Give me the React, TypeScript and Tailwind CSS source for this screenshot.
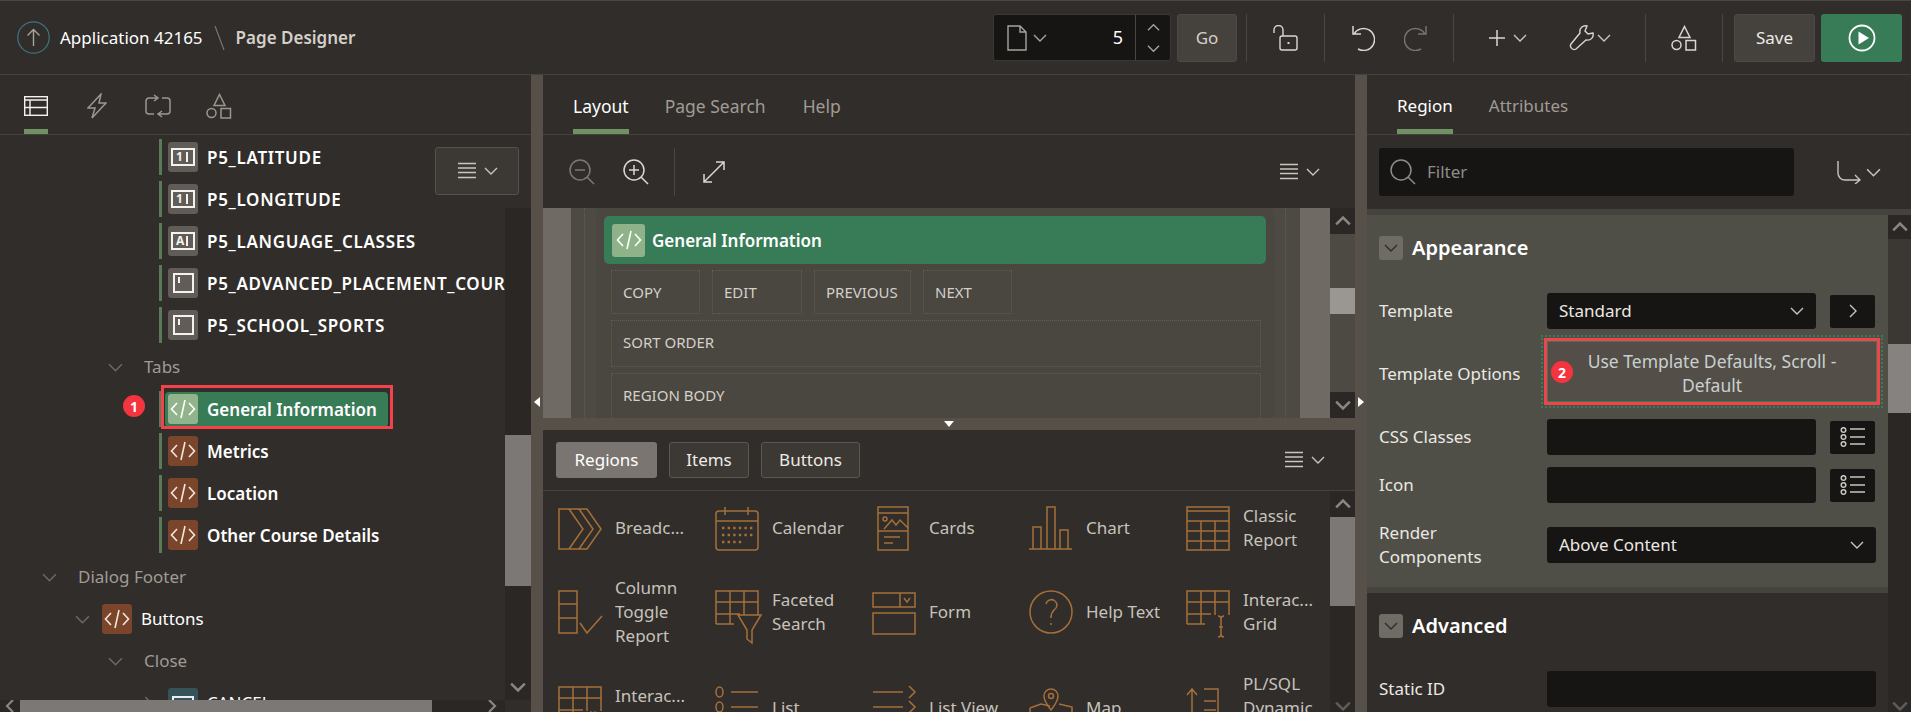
import type { ReactNode } from 'react';

const FONT = 'font-["Noto_Sans",sans-serif]';

const Chevron = ({ size = 'w-[14px] h-[14px]', className = '', color = '#c9c5bf', dir = 'down', weight = '1.4' }: { size?: string; className?: string; color?: string; dir?: 'down' | 'up' | 'right' | 'left'; weight?: string }) => {
    const d = { down: 'M1 4l6 6 6-6', up: 'M1 10l6-6 6 6', right: 'M4 1l6 6-6 6', left: 'M10 1L4 7l6 6' }[dir];
    return (
        <svg viewBox="0 0 14 14" fill="none" stroke={color} strokeWidth={weight} className={`shrink-0 ${size} ${className}`}>
            <path d={d} />
        </svg>
    );
};

const HamburgerChevron = () => (
    <div className="flex items-center gap-[7px]">
        <svg viewBox="0 0 20 18" fill="none" stroke="#c9c5bf" strokeWidth="1.3" className="w-[20px] h-[18px]">
            <path d="M1 1.5h18M1 6h18M1 10.5h18M1 15.5h18" />
        </svg>
        <Chevron />
    </div>
);

const Shapes = ({ color = '#c9c5bf' }: { color?: string }) => (
    <svg viewBox="0 0 26 26" fill="none" stroke={color} strokeWidth="1.5" className="w-[26px] h-[26px]">
        <path d="M13.5 1.5l5.5 11H8z" />
        <circle cx="5.5" cy="20" r="4.5" />
        <rect x="15" y="15.5" width="9.5" height="9.5" />
    </svg>
);

const CodeIcon = ({ bg, color = '#f1e8dc' }: { bg: string; color?: string }) => (
    <div className={`w-[30px] h-[30px] rounded-[3px] flex items-center justify-center shrink-0 ${bg}`}>
        <svg viewBox="0 0 26 20" fill="none" stroke={color} strokeWidth="1.6" className="w-[26px] h-[20px]">
            <path d="M7 4L1.5 10 7 16M19 4l5.500 6L19 16M15 1l-4 18" />
        </svg>
    </div>
);

const ItemIcon = ({ kind }: { kind: 'number' | 'text' | 'blank' }) => (
    <div className="w-[30px] h-[30px] rounded-[3px] bg-[#615c57] flex items-center justify-center shrink-0">
        {kind === 'blank' ? (
            <div className="w-[21px] h-[20px] border-2 border-[#f4f2ef] pl-[3px] pt-[2px]">
                <div className="w-[2px] h-[6px] bg-[#f4f2ef]" />
            </div>
        ) : (
            <div className="w-[24px] h-[18px] border-2 border-[#f4f2ef] flex items-start pl-[3px] text-[12px] leading-[14px] font-bold text-[#f4f2ef]">
                <span className="w-[10px]">{kind === 'number' ? '1' : 'A'}</span>
                <span className="w-[2px] h-[10px] mt-[2px] bg-[#f4f2ef]" />
            </div>
        )}
    </div>
);

const TreeItem = ({ icon, label, caps }: { icon: ReactNode; label: string; caps?: boolean }) => (
    <div className="flex items-center h-[42px] pl-[159px]">
        <div className="w-[3px] h-[36px] bg-[#5b7a58] mr-[6px] shrink-0" />
        {icon}
        <span className={`ml-[9px] mt-[2px] text-[17px] font-semibold text-white whitespace-nowrap ${caps ? 'tracking-[0.7px]' : ''}`}>{label}</span>
    </div>
);

const TreeGroup = ({ pl, label }: { pl: string; label: string }) => (
    <div className={`flex items-center h-[42px] ${pl}`}>
        <Chevron size="w-[15px] h-[15px]" color="#6f6a64" />
        <span className="ml-[21px] text-[17px] text-[#a09b95]">{label}</span>
    </div>
);

const ScrollCell = ({ dir, color = '#8a8680', className = '' }: { dir: 'up' | 'down'; color?: string; className?: string }) => (
    <div className={`flex items-center justify-center bg-[#2a2725] shrink-0 ${className}`}>
        <Chevron dir={dir} color={color} weight="2.2" size="w-[16px] h-[16px]" />
    </div>
);

const LeftPanel = () => (
    <div className="w-[531px] shrink-0 flex flex-col min-h-0">
        <div className="h-[60px] border-b border-[#45413d] flex items-start shrink-0">
            <div className="ml-[24px] w-[24px] h-[59px] border-b-[5px] border-[#6f9163] pt-[21px]">
                <svg viewBox="0 0 24 20" fill="none" stroke="#f4f2ef" strokeWidth="1.4" className="w-[24px] h-[20px]">
                    <rect x="0.7" y="0.7" width="22.600" height="18.600" />
                    <path d="M0.7 4h22.600M0.700 11.500h22.600M6 4v15.300" />
                </svg>
            </div>
            <svg viewBox="0 0 20 26" fill="none" stroke="#9b9791" strokeWidth="1.5" className="ml-[39px] mt-[18px] w-[20px] h-[26px]">
                <path d="M14 1L1 15h7l-3 10 14-15h-7z" />
            </svg>
            <svg viewBox="0 0 26 24" fill="none" stroke="#9b9791" strokeWidth="1.5" className="ml-[38px] mt-[19px] w-[26px] h-[24px]">
                <path d="M13 4H4a3 3 0 0 0-3 3v10a3 3 0 0 0 3 3h5M9 1l4 3-4 3M17 4h5a3 3 0 0 1 3 3v10a3 3 0 0 1-3 3h-9M17 17l-4 3 4 3" />
            </svg>
            <div className="ml-[35px] mt-[18px]">
                <Shapes color="#9b9791" />
            </div>
        </div>
        <div className="relative flex flex-1 min-h-0">
            <div className="w-[505px] overflow-hidden pt-[1px]">
                <TreeItem caps icon={<ItemIcon kind="number" />} label="P5_LATITUDE" />
                <TreeItem caps icon={<ItemIcon kind="number" />} label="P5_LONGITUDE" />
                <TreeItem caps icon={<ItemIcon kind="text" />} label="P5_LANGUAGE_CLASSES" />
                <TreeItem caps icon={<ItemIcon kind="blank" />} label="P5_ADVANCED_PLACEMENT_COURSES" />
                <TreeItem caps icon={<ItemIcon kind="blank" />} label="P5_SCHOOL_SPORTS" />
                <TreeGroup pl="pl-[108px]" label="Tabs" />
                <div className="relative flex items-center h-[42px] pl-[159px]">
                    <div className="w-[3px] h-[36px] bg-[#5b7a58] shrink-0" />
                    <div className="ml-[3px] w-[223px] h-[35px] rounded-[4px] bg-[#387b57] flex items-center pl-[3px]">
                        <CodeIcon bg="bg-[#92b48c]" color="#ffffff" />
                        <span className="ml-[9px] mt-[2px] text-[17px] font-semibold text-white whitespace-nowrap">General Information</span>
                    </div>
                    <div className="absolute left-[161px] top-[-3px] w-[232px] h-[44px] border-[3px] border-[#f4424a]" />
                    <div className="absolute left-[123px] top-[7px] w-[22px] h-[22px] rounded-full bg-[#f4343e] text-white text-[14px] font-bold flex items-center justify-center">1</div>
                </div>
                <TreeItem icon={<CodeIcon bg="bg-[#7a452a]" />} label="Metrics" />
                <TreeItem icon={<CodeIcon bg="bg-[#7a452a]" />} label="Location" />
                <TreeItem icon={<CodeIcon bg="bg-[#7a452a]" />} label="Other Course Details" />
                <TreeGroup pl="pl-[42px]" label="Dialog Footer" />
                <div className="flex items-center h-[42px] pl-[75px]">
                    <Chevron size="w-[15px] h-[15px]" color="#6f6a64" />
                    <div className="ml-[12px]">
                        <CodeIcon bg="bg-[#7a452a]" />
                    </div>
                    <span className="ml-[9px] text-[17px] text-white">Buttons</span>
                </div>
                <TreeGroup pl="pl-[108px]" label="Close" />
                <div className="flex items-center h-[42px] pl-[141px]">
                    <Chevron dir="right" size="w-[15px] h-[15px]" color="#6f6a64" />
                    <div className="ml-[12px] w-[30px] h-[30px] rounded-[3px] bg-[#36535a] shrink-0 flex items-center justify-center">
                        <div className="w-[22px] h-[14px] border-2 border-[#e8edee]" />
                    </div>
                    <span className="ml-[9px] text-[17px] text-white">CANCEL</span>
                </div>
            </div>
            <div className="w-[26px] shrink-0 mt-[73px] flex flex-col bg-[#2a2725]">
                <div className="h-[227px] shrink-0" />
                <div className="h-[151px] shrink-0 bg-[#7b7875]" />
                <div className="flex-1" />
                <ScrollCell dir="down" className="h-[26px]" />
            </div>
            <div className="absolute left-[435px] top-[12px] w-[84px] h-[48px] bg-[#3c3834] border border-[#55514c] rounded-[3px] flex items-center justify-center">
                <HamburgerChevron />
            </div>
        </div>
        <div className="h-[12px] w-[505px] shrink-0 flex items-center bg-[#2a2725] overflow-hidden">
            <div className="w-[20px] shrink-0 flex justify-center">
                <Chevron dir="left" color="#8a8680" weight="2.2" />
            </div>
            <div className="w-[412px] h-full shrink-0 bg-[#7b7875]" />
            <div className="flex-1 flex justify-end pr-[6px]">
                <Chevron dir="right" color="#8a8680" weight="2.2" />
            </div>
        </div>
    </div>
);

const Splitter = ({ dir }: { dir: 'left' | 'right' }) => (
    <div className="w-[12px] shrink-0 bg-[#565049] flex items-center justify-center pt-[16px]">
        <div
            className={
                dir === 'left'
                    ? 'w-0 h-0 border-y-[5px] border-y-transparent border-r-[6px] border-r-white'
                    : 'w-0 h-0 border-y-[5px] border-y-transparent border-l-[6px] border-l-white'
            }
        />
    </div>
);

const DottedBox = ({ label, className }: { label: string; className: string }) => (
    <div className={`border border-dotted border-[#625d56] flex items-center pl-[11px] text-[15px] text-[#d4d0ca] ${className}`}>{label}</div>
);

const A = 'stroke-[#a56f39]';

const galleryIcons: Record<string, ReactNode> = {
    breadcrumb: <path d="M1 3h28l14 20-14 20H1zM11 3l14 20-14 20M21 3l14 20-14 20" />,
    calendar: (
        <g>
            <rect x="1" y="5" width="42" height="39" rx="3" />
            <path d="M1 15h42M10 1v8M33 1v8" />
            <path strokeDasharray="2.400 3.200" strokeWidth="2.400" d="M7 22h31M7 29h31M7 36h22" />
        </g>
    ),
    cards: (
        <g>
            <rect x="6" y="1" width="30" height="43" />
            <path d="M6 7h30M6 25h30M12 31h16M12 37h9M12 23l8-9 4 5 4-5 8 8" />
            <circle cx="13" cy="13" r="2" />
        </g>
    ),
    chart: <path d="M0 43h43M4 43V21h8v22M18 43V1h8v42M31 43V24h8v19" />,
    classic: <path d="M1 1h42v43H1zM1 5h42M1 15h42M1 25h42M1 35h42M15 15v29M29 15v29" />,
    toggle: <path d="M1 1h18v42H1zM1 14h18M1 28h18M22 33l7 10 15-17" />,
    faceted: (
        <g>
            <path d="M1 34V1h42v24M1 12h42M1 24h24M15 1v33M29 1v24M1 34h18" />
            <path d="M23 25h23l-9 15v13l-5-4V40z" />
        </g>
    ),
    form: (
        <g>
            <path d="M1 3h42v14H1zM28 3v14M32 8l3 4 3-4" />
            <rect x="1" y="23" width="42" height="21" />
        </g>
    ),
    help: (
        <g>
            <circle cx="22" cy="22" r="21" />
            <path d="M17 14a5.500 5.500 0 1 1 8 6c-2 2-3 4-3 8M22 33v2" />
        </g>
    ),
    grid: (
        <g>
            <path d="M1 34V1h42v24M1 12h42M1 24h24M15 1v33M29 1v24M1 34h18" />
            <path d="M32 26c2 0 3 1 3 3v15c0 2-1 3-3 3M38 26c-2 0-3 1-3 3v15c0 2 1 3 3 3M33 37h4" />
        </g>
    ),
    list: <path d="M16 6h27M16 21h27M8 6a3.500 5 0 1 1-7 0 3.500 5 0 0 1 7 0zM8 21a3.500 5 0 1 1-7 0 3.500 5 0 0 1 7 0z" />,
    listView: <path d="M1 6h30M1 21h30M37 0l6 6-6 6M37 15l6 6-6 6" />,
    map: (
        <g>
            <path d="M1 22l11-4 9 2M30 18l13 3v25M1 22v25" />
            <path d="M22 24c-4-5-7-9-7-14a7 7 0 0 1 14 0c0 5-3 9-7 14z" />
            <circle cx="22" cy="10" r="2.500" />
        </g>
    ),
    plsql: <path d="M6 30V3M1 9l5-6 5 6M18 3h14v30M18 15h12M18 24h12" />,
};

const GalleryCell = ({ icon, label }: { icon: string; label: ReactNode }) => (
    <div className="flex items-center pl-[2px]">
        <div className="w-[57px] shrink-0">
            <svg viewBox="0 0 46 44" fill="none" strokeWidth="1.500" className={`w-[46px] h-[44px] overflow-visible ${A}`}>
                {galleryIcons[icon]}
            </svg>
        </div>
        <div className="text-[17px] leading-[24px] text-[#c6c2bc] whitespace-nowrap">{label}</div>
    </div>
);

const CenterPanel = () => (
    <div className="w-[812px] shrink-0 flex flex-col min-h-0">
        <div className="h-[60px] shrink-0 border-b border-[#45413d] flex items-start pl-[30px] text-[17.5px]">
            <div className="h-[59px] border-b-[5px] border-[#6f9163] pt-[18px] text-white">Layout</div>
            <div className="ml-[36px] pt-[18px] text-[#a09b95]">Page Search</div>
            <div className="ml-[37px] pt-[18px] text-[#a09b95]">Help</div>
        </div>
        <div className="h-[73px] shrink-0 flex items-center pl-[26px] pr-[35px]">
            <svg viewBox="0 0 26 26" fill="none" stroke="#7c7873" strokeWidth="1.500" className="w-[26px] h-[26px]">
                <circle cx="11" cy="11" r="10" />
                <path d="M18 18l7 7M6 11h10" />
            </svg>
            <svg viewBox="0 0 26 26" fill="none" stroke="#dad7d2" strokeWidth="1.500" className="ml-[28px] w-[26px] h-[26px]">
                <circle cx="11" cy="11" r="10" />
                <path d="M18 18l7 7M6 11h10M11 6v10" />
            </svg>
            <div className="ml-[25px] w-px h-[48px] bg-[#4a4642]" />
            <svg viewBox="0 0 22 22" fill="none" stroke="#dad7d2" strokeWidth="1.500" className="ml-[28px] w-[22px] h-[22px]">
                <path d="M13 1h8v8M21 1L1 21M1 13v8h8" />
            </svg>
            <div className="ml-auto">
                <HamburgerChevron />
            </div>
        </div>
        <div className="h-[210px] shrink-0 flex overflow-hidden bg-[#4d4943]">
            <div className="w-[28px] shrink-0 bg-[#6f6a64]" />
            <div className="w-[25px] shrink-0">
                <div className="ml-[13px] h-full border-l border-dotted border-[#625d56]" />
            </div>
            <div className="w-[678px] shrink-0 bg-[#4a4640] rounded-t-[6px] px-[8px] pt-[8px]">
                <div className="h-[48px] rounded-[5px] bg-[#387b57] flex items-center pl-[8px]">
                    <div className="w-[33px] h-[33px] rounded-[3px] bg-[#8fb28b] flex items-center justify-center shrink-0">
                        <svg viewBox="0 0 26 20" fill="none" stroke="#ffffff" strokeWidth="1.600" className="w-[26px] h-[20px]">
                            <path d="M7 4L1.500 10 7 16M19 4l5.500 6L19 16M15 1l-4 18" />
                        </svg>
                    </div>
                    <span className="ml-[7px] mt-[2px] text-[17px] font-semibold text-white">General Information</span>
                </div>
                <div className="flex gap-[12px] mt-[6px] ml-[7px]">
                    <DottedBox label="COPY" className="w-[89px] h-[44px]" />
                    <DottedBox label="EDIT" className="w-[90px] h-[44px]" />
                    <DottedBox label="PREVIOUS" className="w-[97px] h-[44px]" />
                    <DottedBox label="NEXT" className="w-[89px] h-[44px]" />
                </div>
                <DottedBox label="SORT ORDER" className="mt-[6px] ml-[7px] w-[650px] h-[47px] pb-[2px]" />
                <DottedBox label="REGION BODY" className="mt-[6px] ml-[7px] w-[650px] h-[47px] pb-[2px]" />
            </div>
            <div className="w-[26px] shrink-0">
                <div className="ml-[11px] h-full border-l border-dotted border-[#625d56]" />
            </div>
            <div className="w-[30px] shrink-0 bg-[#6f6a64]" />
            <div className="w-[25px] shrink-0 flex flex-col bg-[#4d4943]">
                <ScrollCell dir="up" className="h-[26px]" />
                <div className="h-[54px] shrink-0" />
                <div className="h-[26px] shrink-0 bg-[#9a9792]" />
                <div className="flex-1" />
                <ScrollCell dir="down" className="h-[26px]" />
            </div>
        </div>
        <div className="h-[12px] shrink-0 bg-[#565049] flex justify-center pt-[3px]">
            <div className="w-0 h-0 border-x-[5px] border-x-transparent border-t-[6px] border-t-white" />
        </div>
        <div className="h-[61px] shrink-0 border-b border-[#45413d] flex items-start pt-[12px] pl-[13px] pr-[30px] gap-[12px] text-[17px]">
            <div className="w-[101px] h-[36px] rounded-[3px] bg-[#7a7570] text-white flex items-center justify-center">Regions</div>
            <div className="w-[80px] h-[36px] rounded-[3px] bg-[#3c3834] border border-[#5b5751] text-[#eeeae5] flex items-center justify-center">Items</div>
            <div className="w-[99px] h-[36px] rounded-[3px] bg-[#3c3834] border border-[#5b5751] text-[#eeeae5] flex items-center justify-center">Buttons</div>
            <div className="ml-auto pt-[9px]">
                <HamburgerChevron />
            </div>
        </div>
        <div className="flex flex-1 min-h-0">
            <div className="flex-1 overflow-hidden pl-[13px] pt-[13px] grid grid-cols-[repeat(5,157px)] auto-rows-min gap-y-[24px]">
                <GalleryCell icon="breadcrumb" label="Breadc..." />
                <GalleryCell icon="calendar" label="Calendar" />
                <GalleryCell icon="cards" label="Cards" />
                <GalleryCell icon="chart" label="Chart" />
                <GalleryCell icon="classic" label={<>Classic<br />Report</>} />
                <GalleryCell icon="toggle" label={<>Column<br />Toggle<br />Report</>} />
                <GalleryCell icon="faceted" label={<>Faceted<br />Search</>} />
                <GalleryCell icon="form" label="Form" />
                <GalleryCell icon="help" label="Help Text" />
                <GalleryCell icon="grid" label={<>Interac...<br />Grid</>} />
                <GalleryCell icon="grid" label={<>Interac...<br />Report</>} />
                <GalleryCell icon="list" label="List" />
                <GalleryCell icon="listView" label="List View" />
                <GalleryCell icon="map" label="Map" />
                <GalleryCell icon="plsql" label={<>PL/SQL<br />Dynamic<br />Content</>} />
            </div>
            <div className="w-[25px] shrink-0 flex flex-col bg-[#2a2725]">
                <ScrollCell dir="up" className="h-[26px]" />
                <div className="h-[89px] shrink-0 bg-[#7b7875]" />
                <div className="flex-1" />
                <ScrollCell dir="down" color="#5f5b56" className="h-[12px]" />
            </div>
        </div>
    </div>
);

const ListButton = () => (
    <div className="ml-[14px] w-[45px] h-[33px] rounded-[2px] bg-[#161513] flex items-center justify-center shrink-0">
        <svg viewBox="0 0 26 20" fill="none" stroke="#c9c5bf" strokeWidth="1.500" className="w-[26px] h-[20px]">
            <circle cx="3.500" cy="3" r="2.300" />
            <circle cx="3.500" cy="10" r="2.300" />
            <circle cx="3.500" cy="17" r="2.300" />
            <path d="M10 2h15M10 10h15M10 17h15" />
        </svg>
    </div>
);

const Field = ({ className = 'w-[269px]', children }: { className?: string; children?: ReactNode }) => (
    <div className={`h-[36px] rounded-[3px] bg-[#161513] flex items-center px-[12px] text-[17px] text-[#ebe8e3] shrink-0 ${className}`}>{children}</div>
);

const PropRow = ({ label, className = '', children }: { label: ReactNode; className?: string; children: ReactNode }) => (
    <div className={`flex items-center pl-[12px] ${className}`}>
        <div className="w-[168px] shrink-0 text-[17px] leading-[24px] text-[#ebe8e3]">{label}</div>
        {children}
    </div>
);

const SectionHead = ({ label }: { label: string }) => (
    <div className="flex items-center pl-[12px]">
        <div className="w-[24px] h-[24px] rounded-[3px] bg-[#6f6b65] flex items-center justify-center">
            <Chevron color="#2f2c29" />
        </div>
        <span className="ml-[9px] text-[20px] font-semibold text-white leading-[24px]">{label}</span>
    </div>
);

const RightPanel = () => (
    <div className="flex-1 flex flex-col min-h-0 min-w-0">
        <div className="h-[60px] shrink-0 border-b border-[#45413d] flex items-start pl-[30px] text-[17px]">
            <div className="h-[59px] border-b-[5px] border-[#6f9163] pt-[18px] text-white">Region</div>
            <div className="ml-[36px] pt-[18px] text-[#a09b95]">Attributes</div>
        </div>
        <div className="h-[74px] shrink-0 flex items-center pl-[12px]">
            <div className="w-[415px] h-[48px] rounded-[3px] bg-[#161513] flex items-center pl-[11px]">
                <svg viewBox="0 0 26 26" fill="none" stroke="#8f8b85" strokeWidth="1.500" className="w-[26px] h-[26px]">
                    <circle cx="11" cy="11" r="10" />
                    <path d="M18 18l7 7" />
                </svg>
                <span className="ml-[11px] text-[17px] text-[#8f8b85]">Filter</span>
            </div>
            <svg viewBox="0 0 24 24" fill="none" stroke="#c9c5bf" strokeWidth="1.400" className="ml-[43px] w-[24px] h-[24px]">
                <path d="M1 1v12a7 7 0 0 0 7 7h15M18 15l5 5-5 4" />
            </svg>
            <Chevron size="w-[15px] h-[15px]" className="ml-[5px]" />
        </div>
        <div className="h-[6px] shrink-0 bg-[#46423e]" />
        <div className="flex flex-1 min-h-0">
            <div className="w-[521px] shrink-0 overflow-hidden">
                <div className="h-[372px] bg-[#4f4f48] pt-[21px]">
                    <SectionHead label="Appearance" />
                    <PropRow label="Template" className="mt-[33px]">
                        <Field className="w-[269px] justify-between">
                            Standard
                            <Chevron />
                        </Field>
                        <div className="ml-[14px] w-[45px] h-[33px] rounded-[2px] bg-[#161513] flex items-center justify-center">
                            <Chevron dir="right" />
                        </div>
                    </PropRow>
                    <PropRow label={<span className="block pt-[4px]">Template Options</span>} className="mt-[9px]">
                        <div className="relative -ml-[3px] w-[336px] h-[67px] border-[3px] border-[#f4424a] outline-2 outline-dotted outline-[#387b57] outline-offset-[1px]">
                            <div className="h-full border border-[#387b57] bg-[#544e48] flex items-center justify-center text-center text-[17.500px] leading-[24px] text-[#c8d0cf]">
                                <span className="pt-[2px]">
                                    Use Template Defaults, Scroll -<br />
                                    Default
                                </span>
                            </div>
                            <div className="absolute left-[4px] top-[20px] w-[22px] h-[22px] rounded-full bg-[#f4343e] text-white text-[14px] font-bold flex items-center justify-center">2</div>
                        </div>
                    </PropRow>
                    <PropRow label="CSS Classes" className="mt-[14px]">
                        <Field />
                        <ListButton />
                    </PropRow>
                    <PropRow label="Icon" className="mt-[12px]">
                        <Field />
                        <ListButton />
                    </PropRow>
                    <PropRow label={<>Render<br />Components</>} className="mt-[18px]">
                        <Field className="w-[329px] justify-between">
                            Above Content
                            <Chevron />
                        </Field>
                    </PropRow>
                </div>
                <div className="h-[6px] bg-[#46423e]" />
                <div className="pt-[21px]">
                    <SectionHead label="Advanced" />
                    <PropRow label="Static ID" className="mt-[33px]">
                        <Field className="w-[329px]" />
                    </PropRow>
                </div>
            </div>
            <div className="flex-1 flex flex-col bg-[#3b3733]">
                <ScrollCell dir="up" className="h-[24px]" />
                <div className="h-[105px] shrink-0" />
                <div className="h-[69px] shrink-0 bg-[#858280]" />
                <div className="flex-1 bg-[#2a2725]" />
                <ScrollCell dir="down" color="#5f5b56" className="h-[12px]" />
            </div>
        </div>
    </div>
);

const Header = () => (
    <div className="h-[75px] shrink-0 border-t border-[#4a4642] border-b border-b-[#45413d] flex items-center pl-[17px] pr-[9px]">
        <svg viewBox="0 0 33 33" fill="none" className="w-[33px] h-[33px]">
            <circle cx="16.500" cy="16.500" r="15.700" stroke="#3f7583" strokeWidth="1.200" />
            <path d="M16.500 25V9M10.500 14.500l6-6 6 6" stroke="#a8a49e" strokeWidth="1.400" />
        </svg>
        <span className="ml-[10px] text-[17px] text-white">Application 42165</span>
        <svg viewBox="0 0 11 24" fill="none" stroke="#7c7873" strokeWidth="1.200" className="ml-[11px] w-[11px] h-[24px]">
            <path d="M1 0l9 24" />
        </svg>
        <span className="ml-[11px] text-[17px] font-semibold text-[#d4d0ca]">Page Designer</span>
        <div className="ml-auto flex items-center">
            <div className="w-[178px] h-[47px] rounded-[3px] border border-[#3c3834] bg-[#161513] flex items-center pl-[13px]">
                <svg viewBox="0 0 20 26" fill="none" stroke="#a8a49e" strokeWidth="1.400" className="w-[20px] h-[26px]">
                    <path d="M1 1h12l6 6v18H1zM13 1v6h6" />
                </svg>
                <Chevron className="ml-[6px]" color="#a8a49e" />
                <span className="ml-auto mr-[12px] text-[18px] text-white">5</span>
                <div className="w-[35px] h-full border-l border-[#4a4642] flex flex-col items-center justify-center gap-[8px]">
                    <Chevron dir="up" color="#a8a49e" size="w-[13px] h-[13px]" />
                    <Chevron color="#a8a49e" size="w-[13px] h-[13px]" />
                </div>
            </div>
            <div className="ml-[6px] w-[60px] h-[48px] rounded-[3px] bg-[#45413d] border border-[#4d4944] flex items-center justify-center text-[17px] text-[#d4d0ca]">Go</div>
            <div className="ml-[9px] w-px h-[48px] bg-[#4a4642]" />
            <svg viewBox="0 0 25 26" fill="none" stroke="#dad7d2" strokeWidth="1.400" className="ml-[26px] w-[25px] h-[26px] shrink-0">
                <path d="M1 8V5a4.500 4.500 0 0 1 9 0v6" />
                <rect x="7" y="11" width="17" height="14" rx="2" />
                <path d="M15.500 17v2" strokeWidth="2" />
            </svg>
            <div className="ml-[26px] w-px h-[48px] bg-[#4a4642]" />
            <svg viewBox="0 0 24 26" fill="none" stroke="#dad7d2" strokeWidth="1.500" className="ml-[26px] w-[24px] h-[26px]">
                <path d="M3 9a11 11 0 1 1 4 15M2 1v8h8" />
            </svg>
            <svg viewBox="0 0 24 26" fill="none" stroke="#76726d" strokeWidth="1.500" className="ml-[29px] w-[24px] h-[26px]">
                <path d="M21 9a11 11 0 1 0-4 15M22 1v8h-8" />
            </svg>
            <div className="ml-[25px] w-px h-[48px] bg-[#4a4642]" />
            <svg viewBox="0 0 16 16" fill="none" stroke="#dad7d2" strokeWidth="1.500" className="ml-[35px] w-[16px] h-[16px]">
                <path d="M8 0v16M0 8h16" />
            </svg>
            <Chevron className="ml-[8px]" />
            <svg viewBox="0 0 27 26" fill="none" stroke="#dad7d2" strokeWidth="1.400" className="ml-[42px] w-[27px] h-[26px]">
                <path d="M24 8l-5 1-3-3 2-5c-4-1-8 2-7 7L2 19c-2 3 2 7 5 5l10-9c5 1 8-3 7-7z" />
            </svg>
            <Chevron className="ml-[1px]" />
            <div className="ml-[34px] w-px h-[48px] bg-[#4a4642]" />
            <div className="ml-[25px]">
                <Shapes color="#dad7d2" />
            </div>
            <div className="ml-[25px] w-px h-[48px] bg-[#4a4642]" />
            <div className="ml-[11px] w-[81px] h-[48px] rounded-[3px] bg-[#45413d] border border-[#4d4944] flex items-center justify-center text-[17px] text-[#eeeae5]">Save</div>
            <div className="ml-[6px] w-[81px] h-[48px] rounded-[3px] bg-[#387b57] flex items-center justify-center">
                <svg viewBox="0 0 28 28" fill="none" className="w-[28px] h-[28px]">
                    <circle cx="14" cy="14" r="12.500" stroke="#ffffff" strokeWidth="1.800" />
                    <path d="M10.500 7.500L21 14l-10.500 6.500z" fill="#ffffff" />
                </svg>
            </div>
        </div>
    </div>
);

export default function App() {
    return (
        <div className={`w-[1911px] h-[712px] overflow-hidden flex flex-col bg-[#312d2a] ${FONT}`}>
            <Header />
            <div className="flex flex-1 min-h-0">
                <LeftPanel />
                <Splitter dir="left" />
                <CenterPanel />
                <Splitter dir="right" />
                <RightPanel />
            </div>
        </div>
    );
}
